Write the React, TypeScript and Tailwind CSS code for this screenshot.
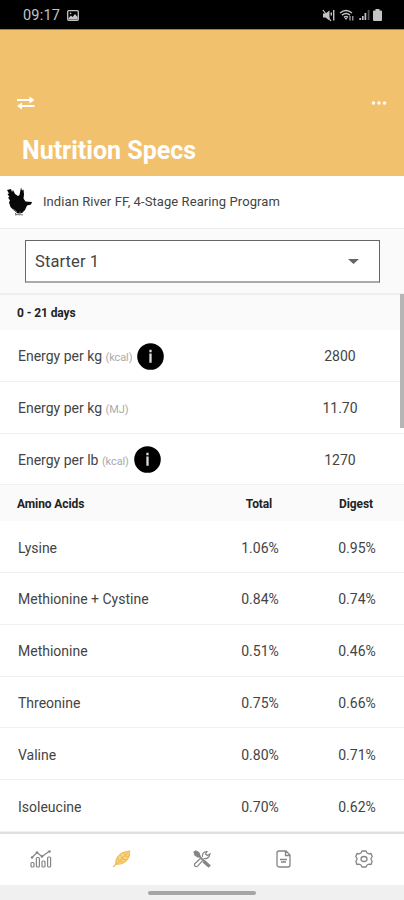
import React from 'react';

const ENERGY = [
  { label: 'Energy per kg', unit: 'kcal', value: '2800', info: true },
  { label: 'Energy per kg', unit: 'MJ', value: '11.70', info: false },
  { label: 'Energy per lb', unit: 'kcal', value: '1270', info: true },
];

const AMINO_ACIDS = [
  { name: 'Lysine', total: '1.06%', digest: '0.95%' },
  { name: 'Methionine + Cystine', total: '0.84%', digest: '0.74%' },
  { name: 'Methionine', total: '0.51%', digest: '0.46%' },
  { name: 'Threonine', total: '0.75%', digest: '0.66%' },
  { name: 'Valine', total: '0.80%', digest: '0.71%' },
  { name: 'Isoleucine', total: '0.70%', digest: '0.62%' },
];

const StatusBar: React.FC = () => (
  <div className="flex h-[29px] shrink-0 items-center bg-black pl-[23px] pr-[22px] pt-px text-[#c4c4c4]">
    <span className="w-[38px] whitespace-nowrap pt-[2px] text-[14.5px] tracking-[0.2px]">09:17</span>
    <svg className="ml-[6px] h-[11px] w-[12px]" viewBox="0 0 12 11" fill="none" stroke="currentColor" strokeWidth="1.3">
      <rect x="0.7" y="0.7" width="10.6" height="9.6" rx="1" />
      <path d="M1.5 9.5V8l2.5-2.5 1.5 1.5 2.5-3 2.7 3v2.5z" fill="currentColor" stroke="none" />
      <circle cx="3.6" cy="3.4" r="0.8" fill="currentColor" stroke="none" />
    </svg>
    <div className="ml-auto flex items-center">
      <svg className="h-[13px] w-[13px]" viewBox="0 0 13 13" fill="none" stroke="currentColor" strokeWidth="1.4">
        <path d="M1 4.5h2.5L7.5 1.5v10l-4-3H1z" fill="currentColor" stroke="none" />
        <path d="M1 1l8 11" strokeWidth="1.2" />
        <path d="M9.3 3.5v3M11.7 1v10.5" />
      </svg>
      <svg className="ml-[4px] h-[13px] w-[16px]" viewBox="0 0 16 13" fill="none" stroke="currentColor" strokeWidth="1.5">
        <path d="M1 4Q7 -1 13 4M3 6.2Q7 3 11 6.2M5 8.3Q7 6.8 9 8.3" />
        <path d="M5.5 9h3L7 11z" fill="currentColor" stroke="none" />
        <path d="M11 7v4.5M13.8 7v4.5" strokeWidth="1.1" />
      </svg>
      <svg className="ml-[4px] h-[12px] w-[11px]" viewBox="0 0 11 12" fill="none" stroke="currentColor" strokeWidth="1.7">
        <path d="M1.2 11V9M3.8 11V7M6.4 11V4" />
        <path d="M9.6 11V1" stroke="#555" />
      </svg>
      <svg className="ml-[3px] h-[12px] w-[9px]" viewBox="0 0 9 12" fill="currentColor">
        <path d="M2.5 0h4v1.5H8a1 1 0 0 1 1 1V11a1 1 0 0 1-1 1H1a1 1 0 0 1-1-1V2.5a1 1 0 0 1 1-1h1.5z" />
      </svg>
    </div>
  </div>
);

const Hen: React.FC = () => (
  <svg className="h-[30px] w-[26px]" viewBox="0 0 26 30">
    <path
      d="M0 3l4-1 1 3 1-2 2 4 3 2 1.500-1 1-5L14 .5l1 3 1.500-1 .5 5-.5 4 2 3 6.500.5-1 2.500-4 1-2 4.500-3 3-4 .5-4-3-3.500-3.500-1.500-4.500 1-2-2-3 1.500-.5-2-3 1.500-.5z"
      fill="#080808"
    />
    <path d="M6 22l4 3-2 2 5 1M13 24.500v3l3 .5M8 28l3-.5" fill="none" stroke="#777" strokeWidth="1" />
  </svg>
);

const InfoBadge: React.FC = () => (
  <svg className="ml-[5px] h-[27px] w-[27px]" viewBox="0 0 26 26">
    <circle cx="13" cy="13" r="12.8" fill="#000" />
    <path d="M13 6.500v2.500M13 10v9" stroke="#ddd" strokeWidth="2.2" />
  </svg>
);

const BottomNav: React.FC = () => (
  <nav className="flex h-[53px] shrink-0 items-center border-t-2 border-[#e0e0e0] bg-white pb-px pl-px text-[#858585]">
    <div className="flex flex-1 justify-center">
      <svg className="h-[18px] w-[22px]" viewBox="0 0 22 18" fill="none" stroke="currentColor" strokeWidth="1.2">
        <path d="M2 7.5l5-5 5 4 7-5" />
        <g fill="currentColor" stroke="none">
          <circle cx="2" cy="7.5" r="1.2" />
          <circle cx="7" cy="2.5" r="1.3" />
          <circle cx="12" cy="6.5" r="1.3" />
          <circle cx="19.5" cy="1.5" r="1.3" />
        </g>
        <rect x="1" y="12.5" width="3" height="4.5" rx="1" />
        <rect x="6.4" y="7.5" width="3" height="9.5" rx="1" />
        <rect x="12" y="11" width="3" height="6" rx="1" />
        <rect x="17.6" y="7" width="3" height="10" rx="1" />
      </svg>
    </div>
    <div className="flex flex-1 justify-center">
      <svg className="h-[18px] w-[19px]" viewBox="0 0 19 18" fill="none" stroke="#f0bd58" strokeWidth="1.3">
        <path d="M4 14C3 10 6 5 11 2.5L17.5 1c.5 5-2 9-5.500 11.500-3 2-5 2-8 1.500z" fill="#f8d98e" />
        <path d="M1 17L16 3M6 8l1 3 4 1M9 5l1 4 4 1M12 3l1 3 3 1" />
      </svg>
    </div>
    <div className="flex flex-1 justify-center">
      <svg className="h-[18px] w-[19px]" viewBox="0 0 19 18" fill="none" stroke="currentColor" strokeWidth="1.2">
        <path d="M1 2l2-1 3 2 1 3-2 1-3-2z" fill="currentColor" />
        <path d="M6 6l6 6" strokeWidth="1.8" />
        <path d="M12 11l5 4.5-1.500 1.500-5-4.500z" fill="currentColor" />
        <path d="M7.5 8.5L2 13.5a1.800 1.800 0 0 0 2.600 2.600l5-5.500M10.500 8.500c2 .5 6 0 6.500-4.500l-2.500 1.500-2-1.500 1.500-2.500c-4 0-5 3-4.500 5.500" />
      </svg>
    </div>
    <div className="flex flex-1 justify-center">
      <svg className="h-[18px] w-[15px]" viewBox="0 0 15 18" fill="none" stroke="currentColor" strokeWidth="1.3">
        <path d="M3 1h7l4 4v10a2 2 0 0 1-2 2H3a2 2 0 0 1-2-2V3a2 2 0 0 1 2-2zM9.5 1v4.5H14" />
        <path d="M4 9.5h7M5 12h5" />
      </svg>
    </div>
    <div className="flex flex-1 justify-center">
      <svg className="h-[18px] w-[18px]" viewBox="0 0 18 18" fill="none" stroke="currentColor" strokeWidth="1.3" strokeLinejoin="round">
        <path d="M7 1h4l1 2 2 .8 2-.3 1.2 3L15.8 9l1.4 2.5-1.2 3-2-.3-2 .8-1 2H7l-1-2-2-.8-2 .3-1.2-3L2.200 9 .8 6.500l1.200-3 2 .3L6 3z" />
        <ellipse cx="9" cy="9" rx="3" ry="2.5" />
      </svg>
    </div>
  </nav>
);

const App: React.FC = () => {
  return (
    <div className="flex h-[900px] w-[404px] flex-col overflow-hidden bg-white font-[Roboto,sans-serif] text-[#444]">
      <StatusBar />

      <header className="flex h-[147px] shrink-0 flex-col border-t border-[#a87d43] bg-[#f2c16d] text-white">
        <div className="mt-[66px] flex items-center justify-between pl-[17px] pr-[17px]">
          <svg className="h-[14px] w-[18px]" viewBox="0 0 18 14" fill="#fff">
            <path d="M0 2.9h12.5V.5L17.5 4l-5 3.5V5H0zM17.5 9H5V6.5L0 10l5 3.5V11h12.5z" />
          </svg>
          <svg className="h-[4px] w-[16px]" viewBox="0 0 16 4" fill="#fff">
            <circle cx="2.5" cy="2" r="1.7" />
            <circle cx="8" cy="2" r="1.7" />
            <circle cx="13.5" cy="2" r="1.7" />
          </svg>
        </div>
        <h1 className="ml-[22px] mt-[26px] text-[25px] font-bold leading-[30px]">Nutrition Specs</h1>
      </header>

      <div className="flex h-[52px] shrink-0 items-center pl-[7px]">
        <Hen />
        <span className="ml-[10px] whitespace-nowrap text-[13px] tracking-[0.08px]">Indian River FF, 4-Stage Rearing Program</span>
      </div>

      <div className="h-[65px] shrink-0 border-t border-[#eee] bg-[#fafafa] pl-[25px] pr-[24px] pt-[11px]">
        <div className="flex h-[43px] items-center justify-between border-[1.5px] border-b-2 border-[#666] border-b-[#aaa] bg-white pl-[9px] pr-[20px]">
          <span className="pt-[2px] text-[16.5px] tracking-[0.1px]">Starter 1</span>
          <svg className="h-[5px] w-[11px]" viewBox="0 0 11 5" fill="#666">
            <path d="M0 0h11L5.5 5z" />
          </svg>
        </div>
      </div>

      <main className="relative h-[539px] shrink-0">
        <div className="flex h-[37px] items-center border-t-2 border-[#eee] bg-[#fafafa] pl-[17px] pt-px text-[12px] font-bold tracking-[-0.1px] text-[#222]">
          0 - 21 days
        </div>
        {ENERGY.map((row) => (
          <div key={row.label + row.unit} className="flex h-[51.8px] items-center border-b border-[#f0f0f0] pl-[18px] pt-[2px] text-[14px]">
            <span className="whitespace-nowrap pt-px">
              {row.label} <span className="text-[11px] tracking-[-0.1px] text-[#aaa]">({row.unit})</span>
            </span>
            {row.info && <InfoBadge />}
            <span className="ml-auto mr-[24px] w-[80px] pt-px text-center">{row.value}</span>
          </div>
        ))}
        <div className="flex h-[35.8px] items-center bg-[#fafafa] pl-[17px] pt-px text-[12px] font-bold tracking-[-0.1px] text-[#222]">
          <span className="w-[202px]">Amino Acids</span>
          <span className="w-[80px] text-center">Total</span>
          <span className="ml-[17px] w-[80px] text-center">Digest</span>
        </div>
        {AMINO_ACIDS.map((row) => (
          <div key={row.name} className="flex h-[51.8px] items-center border-b border-[#f0f0f0] pl-[18px] pt-[3px] text-[14px]">
            <span className="w-[202px]">{row.name}</span>
            <span className="w-[80px] text-center">{row.total}</span>
            <span className="ml-[17px] w-[80px] text-center">{row.digest}</span>
          </div>
        ))}
        <div className="absolute right-0 top-[1px] h-[134px] w-[4px] bg-[#b5b5b5]" />
      </main>

      <BottomNav />
      <div className="flex h-[15px] shrink-0 justify-center bg-[#f0f0f0] pt-[6px]">
        <div className="h-[4px] w-[108px] rounded-full bg-[#a5a5a5]" />
      </div>
    </div>
  );
};

export default App;
